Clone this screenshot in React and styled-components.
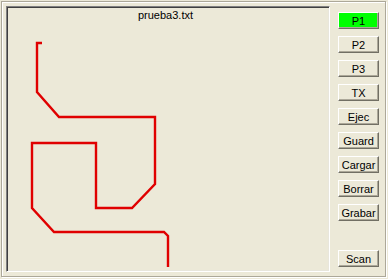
import React from 'react'
import styled, { createGlobalStyle } from 'styled-components'

const GlobalStyle = createGlobalStyle`
  html, body {
    margin: 0;
    padding: 0;
    background: #ece9d8;
  }
  body {
    font-family: 'Liberation Sans', Arial, sans-serif;
    font-size: 11px;
    color: #000;
  }
`

const Window = styled.div`
  width: 388px;
  height: 279px;
  padding: 1px 0 0 1px;
  box-sizing: border-box;
  background: #ece9d8;
`

const Frame = styled.div`
  width: 385px;
  height: 276px;
  box-sizing: border-box;
  border: 1px solid #aca899;
  box-shadow: 1px 1px 0 #fff, inset 1px 1px 0 #fff;
  padding: 4px 3px 3px 4px;
  display: flex;
  flex-flow: row nowrap;
  gap: 8px;
`

const Canvas = styled.div`
  position: relative;
  width: 324px;
  height: 266px;
  box-sizing: border-box;
  border-top: 1px solid #808080;
  border-left: 1px solid #808080;
  border-right: 1px solid #fff;
  border-bottom: 1px solid #fff;
  box-shadow: inset 1px 1px 0 #404040, inset -1px -1px 0 #e8e6dc;
  background: #ece9d8;
`

const Title = styled.div`
  padding-top: 2px;
  text-align: center;
  font-size: 11px;
  line-height: 13px;
  padding-right: 5px;
`

const Drawing = styled.svg`
  position: absolute;
  left: 0;
  top: 0;
`

const ButtonColumn = styled.div`
  display: flex;
  flex-flow: column nowrap;
  gap: 7px;
  padding: 6px 0 5px 0;
  box-sizing: border-box;
  height: 266px;
`

const Button = styled.button`
  width: 41px;
  height: 17px;
  box-sizing: border-box;
  padding: 0;
  margin: 0;
  font-family: 'Liberation Sans', Arial, sans-serif;
  font-size: 11px;
  line-height: 14px;
  color: #000;
  background: ${props => (props.$active ? '#00ff00' : '#ece9d8')};
  border-top: 1px solid #fff;
  border-left: 1px solid #fff;
  border-right: 1px solid #716f64;
  border-bottom: 1px solid #716f64;
  box-shadow: inset -1px -1px 0 #aca899;
  border-radius: 0;
  cursor: pointer;
  &:last-child {
    margin-top: auto;
  }
`

// page coords of the path, shifted by the canvas origin
const points = [
  [41, 42], [36, 42], [36, 91], [58, 116], [154, 116], [154, 183],
  [131, 207], [95, 207], [95, 142], [31, 142], [31, 207], [53, 231],
  [163, 231], [167, 235], [167, 266]
]

const buttons = ['P1', 'P2', 'P3', 'TX', 'Ejec', 'Guard', 'Cargar', 'Borrar', 'Grabar']

export default function App() {
  const d = points.map(([x, y]) => `${x - 6},${y - 6}`).join(' ')
  return (
    <Window>
      <GlobalStyle />
      <Frame>
        <Canvas>
          <Title>prueba3.txt</Title>
          <Drawing width='322' height='264'>
            <polyline
              points={d}
              fill='none'
              stroke='#e00000'
              strokeWidth='2.4'
              strokeLinejoin='miter'
            />
          </Drawing>
        </Canvas>
        <ButtonColumn>
          {buttons.map(b => (
            <Button key={b} $active={b === 'P1'}>{b}</Button>
          ))}
          <Button>Scan</Button>
        </ButtonColumn>
      </Frame>
    </Window>
  )
}
